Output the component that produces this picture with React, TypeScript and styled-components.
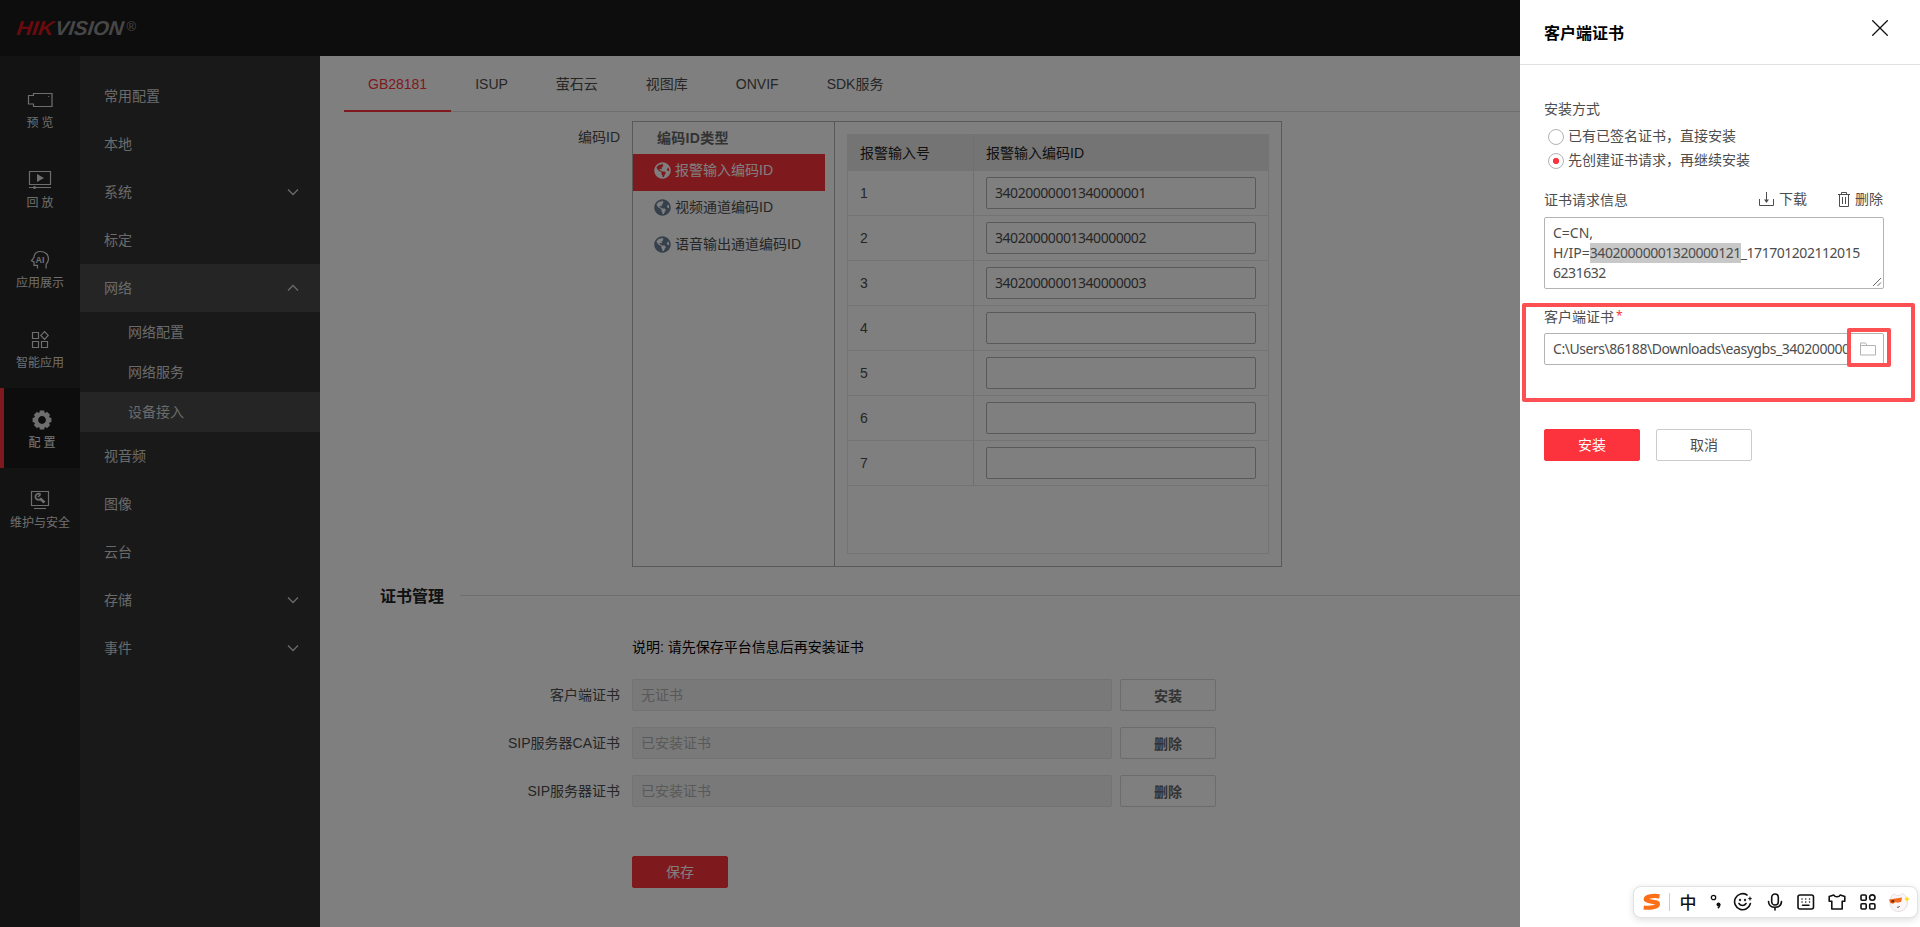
import React from 'react';
import styled, { createGlobalStyle, css } from 'styled-components';
import { FaGlobeAmericas } from 'react-icons/fa';

const arial = `"Liberation Sans", "Noto Sans CJK SC", sans-serif`;
const yahei = `"Noto Sans", "Noto Sans CJK SC", sans-serif`;

const GlobalStyle = createGlobalStyle`
  *, *::before, *::after { box-sizing: border-box; }
  body { margin: 0; overflow: hidden; font: 14px/20px ${arial}; color: #4d4d4d; }
`;

const Page = styled.div`
  position: relative;
  display: flex;
  flex-direction: column;
  height: 927px;
  overflow: hidden;
  background: #fff;
`;

const Header = styled.header`
  flex: none;
  display: flex;
  align-items: center;
  height: 56px;
  padding-left: 15px;
  background: #1a1a1a;
`;

const Body = styled.div`
  flex: 1;
  display: flex;
  min-height: 0;
`;

/* ---------- side rail ---------- */
const Rail = styled.nav`
  flex: none;
  width: 80px;
  padding-top: 12px;
  background: #262626;
`;

const RailItem = styled.a<{ $active?: boolean }>`
  display: flex;
  flex-direction: column;
  align-items: center;
  gap: 2px;
  height: 80px;
  padding-top: 20px;
  font: 12px/18px ${yahei};
  color: #ddd;
  white-space: pre;
  ${(p) => p.$active && css`
    background: #1a1a1a;
    border-left: 4px solid #fc333c;
    color: #eee;
  `}
  svg { display: block; flex: none; }
`;

/* ---------- menu ---------- */
const Menu = styled.nav`
  flex: none;
  width: 240px;
  padding-top: 16px;
  background: #333;
  font-family: ${yahei};
`;

const MenuItem = styled.a<{ $sub?: boolean; $active?: boolean }>`
  display: flex;
  align-items: center;
  justify-content: space-between;
  height: ${(p) => (p.$sub ? 40 : 48)}px;
  padding: 0 21px 0 ${(p) => (p.$sub ? 48 : 24)}px;
  color: #d4d4d4;
  background: ${(p) => (p.$active ? '#4b4b4b' : 'transparent')};
`;

/* ---------- content ---------- */
const Main = styled.main`
  flex: 1;
  min-width: 0;
  padding-left: 24px;
`;

const Tabs = styled.div`
  display: flex;
  height: 56px;
  box-shadow: inset 0 -1px #dcdcdc;
`;

const Tab = styled.a<{ $active?: boolean }>`
  padding: 0 24px;
  line-height: 56px;
  color: ${(p) => (p.$active ? '#fc333c' : '#4d4d4d')};
  box-shadow: ${(p) => (p.$active ? 'inset 0 -2px #fc333c' : 'none')};
`;

const FormRow = styled.div<{ $top: number }>`
  display: flex;
  margin-top: ${(p) => p.$top}px;
`;

const Label = styled.label`
  flex: none;
  width: 276px;
  margin-right: 12px;
  line-height: 32px;
  text-align: right;
`;

const IdPanel = styled.div`
  display: flex;
  width: 650px;
  height: 446px;
  border: 1px solid #b3b3b3;
`;

const Tree = styled.div`
  width: 202px;
  border-right: 1px solid #b3b3b3;
`;

const TreeTitle = styled.div`
  height: 32px;
  padding-left: 24px;
  line-height: 33px;
  font-weight: bold;
  letter-spacing: 0.3px;
  color: #666;
`;

const TreeItem = styled.div<{ $active?: boolean }>`
  display: flex;
  align-items: center;
  gap: 4px;
  width: 192px;
  height: 37px;
  padding: 0 0 6px 21px;
  white-space: nowrap;
  background: ${(p) => (p.$active ? '#fc333c' : 'transparent')};
  color: ${(p) => (p.$active ? '#fff' : '#4d4d4d')};
  svg { margin-top: 2px; color: ${(p) => (p.$active ? '#fff' : '#6c8098')}; }
`;

const Table = styled.div`
  width: 422px;
  height: 420px;
  margin: 12px;
  border: 1px solid #e8e8e8;
  border-top: 0;
`;

const TableRow = styled.div<{ $head?: boolean }>`
  display: grid;
  grid-template-columns: 126px 1fr;
  align-items: center;
  height: ${(p) => (p.$head ? 37 : 45)}px;
  background: ${(p) => (p.$head ? '#e8e8e8' : 'transparent')};
  color: ${(p) => (p.$head ? '#222' : '#4d4d4d')};
  border-bottom: ${(p) => (p.$head ? 0 : 1)}px solid #e8e8e8;
`;

const Cell = styled.div<{ $divided?: boolean }>`
  display: flex;
  align-items: center;
  height: 100%;
  padding-left: 12px;
  border-right: ${(p) => (p.$divided ? '1px solid #dedede' : '0')};
`;

const IdInput = styled.input`
  width: 270px;
  height: 32px;
  padding: 0 8px 2px;
  border: 1px solid #b3b3b3;
  border-radius: 2px;
  font: 14px ${yahei};
  letter-spacing: -0.46px;
  color: #4d4d4d;
  background: #fff;
  outline: 0;
`;

const SectionTitle = styled.div`
  display: flex;
  align-items: center;
  gap: 16px;
  height: 24px;
  margin: 18px 0 0 36px;
  font-size: 16px;
  font-weight: bold;
  line-height: 24px;
  color: #222;
  &::after { content: ''; flex: 1; height: 1px; margin-bottom: 3px; background: #dcdcdc; }
`;

const Note = styled.p`
  margin: 28px 0 0 288px;
  line-height: 20px;
  color: #000;
`;

const Disabled = styled.div`
  width: 480px;
  height: 32px;
  margin-right: 8px;
  padding-left: 8px;
  border: 1px solid #e6e6e6;
  border-radius: 2px;
  background: #f3f3f3;
  line-height: 30px;
  color: #b3b3b3;
`;

const Button = styled.button<{ $primary?: boolean; $strong?: boolean }>`
  width: 96px;
  height: 32px;
  padding: ${(p) => (p.$strong ? '2px 0 0' : '0')};
  border: 1px solid ${(p) => (p.$primary ? '#fc333c' : p.$strong ? '#d8d8d8' : '#ccc')};
  border-radius: 2px;
  background: ${(p) => (p.$primary ? '#fc333c' : '#fff')};
  color: ${(p) => (p.$primary ? '#fff' : p.$strong ? '#666' : '#4d4d4d')};
  font: ${(p) => (p.$strong ? 'bold' : 'normal')} 14px/28px ${yahei};
`;

const SaveRow = styled.div`
  margin: 49px 0 0 288px;
`;

const Mask = styled.div`
  position: absolute;
  inset: 0;
  background: rgba(0, 0, 0, 0.5);
`;

/* ---------- drawer ---------- */
const Drawer = styled.aside`
  position: absolute;
  inset: 0 0 0 auto;
  width: 400px;
  background: #fff;
  font-family: ${yahei};
`;

const DrawerHead = styled.div`
  display: flex;
  justify-content: space-between;
  height: 65px;
  padding: 20px 32px 0 24px;
  border-bottom: 1px solid #e0e0e0;
`;

const DrawerTitle = styled.h2`
  margin: 0;
  font-size: 16px;
  line-height: 27px;
  color: #000;
`;

const DrawerBody = styled.div`
  display: flex;
  flex-direction: column;
  padding: 34px 36px 0 24px;
`;

const FieldLabel = styled.div`
  line-height: 20px;
  sup { margin-left: 2px; color: #fc333c; font-size: 12px; line-height: 0; vertical-align: 2px; }
`;

const RadioGroup = styled.div`
  display: flex;
  flex-direction: column;
  gap: 4px;
  margin: 7px 0 0 4px;
`;

const Radio = styled.label`
  display: flex;
  align-items: center;
  gap: 4px;
  height: 20px;
`;

const Dot = styled.span<{ $on?: boolean }>`
  width: 16px;
  height: 16px;
  margin-top: 1px;
  border: 1px solid #b3b3b3;
  border-radius: 50%;
  background: ${(p) => (p.$on ? 'radial-gradient(circle, #fc333c 2.8px, #fff 3.5px)' : '#fff')};
`;

const RequestBar = styled.div<{ $top: number }>`
  display: flex;
  align-items: center;
  height: 20px;
  margin-top: ${(p) => p.$top}px;
`;

const Action = styled.a<{ $first?: boolean }>`
  display: flex;
  align-items: center;
  gap: 5px;
  margin-left: ${(p) => (p.$first ? 'auto' : '31px')};
  padding: 0 ${(p) => (p.$first ? 0 : 1)}px 2px 0;
`;

const RequestText = styled.div`
  position: relative;
  height: 72px;
  margin-top: 7px;
  padding: 5px 8px;
  border: 1px solid #b3b3b3;
  border-radius: 2px;
  white-space: pre;
`;

const Digits = styled.span`
  letter-spacing: -0.46px;
`;

const Selected = styled.mark`
  padding-bottom: 1px;
  background: #c8c8c8;
  color: #4d4d4d;
  letter-spacing: -0.46px;
`;

const Grip = styled.svg`
  position: absolute;
  right: 1px;
  bottom: 1px;
`;

const FileField = styled.div`
  display: flex;
  align-items: center;
  justify-content: space-between;
  height: 32px;
  margin-top: 6px;
  padding: 0 7px 0 8px;
  border: 1px solid #b3b3b3;
  border-radius: 2px;
`;

const FilePath = styled.span`
  white-space: nowrap;
  letter-spacing: -0.46px;
`;

const Actions = styled.div`
  display: flex;
  gap: 16px;
  margin-top: 64px;
`;

const Highlight = styled.div<{ $x: number; $y: number; $w: number; $h: number }>`
  position: absolute;
  left: ${(p) => p.$x}px;
  top: ${(p) => p.$y}px;
  width: ${(p) => p.$w}px;
  height: ${(p) => p.$h}px;
  border: 4px solid #fd5053;
  border-radius: 2px;
`;

/* ---------- input method bar ---------- */
const ImeBar = styled.div`
  position: absolute;
  right: 2px;
  bottom: 9px;
  display: grid;
  grid-template-columns: 36px 36px 19px 36px 28px 34px 27px 35px 27px;
  align-items: center;
  justify-items: center;
  width: 285px;
  height: 32px;
  border: 1px solid #e2e2e2;
  border-radius: 8px;
  background: #fff;
  box-shadow: 0 2px 7px rgba(0, 0, 0, 0.13);
  svg { display: block; }
`;

const ImeLogo = styled.div`
  justify-self: stretch;
  display: flex;
  justify-content: center;
  height: 18px;
  border-right: 1px solid #ccc;
`;

const ImeMode = styled.span`
  font: 500 17px/30px "Noto Sans CJK SC", sans-serif;
  color: #111;
`;

/* ---------- drawings ---------- */
const Logo = () => (
  <svg width="126" height="20" viewBox="0 0 126 20">
    <g transform="translate(2 0) skewX(-7)" fontFamily="Liberation Sans" fontWeight="700" fontStyle="italic" fontSize="20">
      <text x="1" y="17" fill="#d0151d" textLength="37" lengthAdjust="spacingAndGlyphs">HIK</text>
      <text x="39.500" y="17" fill="#8e8e8e" textLength="68.500" lengthAdjust="spacingAndGlyphs">VISION</text>
    </g>
    <text x="111.500" y="12.500" fill="#8e8e8e" fontFamily="Liberation Sans" fontSize="13">®</text>
  </svg>
);

const line = { fill: 'none', stroke: '#ddd', strokeWidth: 1.2 };

const CameraIcon = () => (
  <svg width="26" height="24" viewBox="0 0 26 24" {...line}>
    <path d="M6.500 5.500h18.500v13H6.500v-2.500H1.500V7.500h5z" />
    <path d="M21 8.500h1.200" stroke="#bbb" />
  </svg>
);

const PlaybackIcon = () => (
  <svg width="24" height="24" viewBox="0 0 24 24" {...line}>
    <path d="M1.500 3.500h21v13h-21zM1 19.500h22" />
    <path d="M9 6l7 4-7 4z" fill="#ddd" stroke="none" />
    <circle cx="6.500" cy="19.500" r="1.500" fill="#ddd" stroke="none" />
  </svg>
);

const AiIcon = () => (
  <svg width="24" height="24" viewBox="0 0 24 24" {...line}>
    <path d="M9.500 20.500v-3.200H6V14l-2.500-1.200L6 9.300C6.300 5.700 8.700 3.500 12.500 3.500c4.600 0 8 3 8 7.200 0 2.800-1.200 4.200-2.400 5.800v4" />
    <text x="7.600" y="14.800" fontFamily="Liberation Sans" fontWeight="700" fontSize="9" fill="#ddd" stroke="none">AI</text>
  </svg>
);

const AppsIcon = () => (
  <svg width="24" height="24" viewBox="0 0 24 24" {...line}>
    <path d="M4.500 4.500h6v6h-6zM4.500 13.500h6v6h-6zM13.500 13.500h6v6h-6zM16.500 3.500l3.700 3.900-3.700 3.900-3.700-3.900z" />
  </svg>
);

const GearIcon = () => (
  <svg width="24" height="24" viewBox="-12 -12 24 24">
    <circle r="6" fill="none" stroke="#ddd" strokeWidth="4.200" />
    {[0, 45, 90, 135].map((a) => (
      <path key={a} d="M-2.300-9.400h4.600v3h-4.600zM-2.300 6.400h4.600v3h-4.600z" fill="#ddd" transform={`rotate(${a})`} />
    ))}
  </svg>
);

const MaintainIcon = () => (
  <svg width="24" height="24" viewBox="0 0 24 24" {...line}>
    <path d="M3.500 3.500h17v14h-17zM6 20.500h12" />
    <path d="M12 10.500l4.500 4" strokeWidth="2.800" />
    <path d="M12.700 6.500a3.100 3.100 0 1 0 .5 3.800" strokeWidth="1.700" />
    <path d="M10 9l2.500-2.500" strokeWidth="1.400" />
  </svg>
);

const Chevron = ({ up }: { up?: boolean }) => (
  <svg width="12" height="8" viewBox="0 0 12 8" fill="none" stroke="#d4d4d4" strokeWidth="1.300">
    <path d={up ? 'M1 6.500l5-5 5 5' : 'M1 1.500l5 5 5-5'} />
  </svg>
);

const CloseIcon = () => (
  <svg width="16" height="16" viewBox="0 0 16 16" stroke="#111" strokeWidth="1.300">
    <path d="M.3.300l15.400 15.400M15.700.300L.300 15.700" />
  </svg>
);

const DownloadIcon = () => (
  <svg width="15" height="15" viewBox="0 0 15 15" fill="none" stroke="#4d4d4d">
    <path d="M.500 7v6.500h14V7M7.500 0v10" />
    <path d="M5 7.500h5l-2.500 3.500z" fill="#4d4d4d" stroke="none" />
  </svg>
);

const TrashIcon = () => (
  <svg width="12" height="15" viewBox="0 0 12 15" fill="none" stroke="#4d4d4d">
    <path d="M0 2.500h12M3.500 2.500v-2h5v2M1.500 2.500v12h9v-12M4.500 5v7M7.500 5v7" />
  </svg>
);

const FolderIcon = () => (
  <svg width="16" height="14" viewBox="0 0 16 14" fill="none" stroke="#b3b3b3">
    <path d="M.500 13V1h5l1.500 2.500h8.500V13zM.500 3.500H7" />
  </svg>
);

const ime = { fill: 'none', stroke: '#111', strokeWidth: 1.6, strokeLinecap: 'round' as const, strokeLinejoin: 'round' as const };

const SogouIcon = () => (
  <svg width="20" height="18" viewBox="0 0 20 18" fill="none" stroke="#fb6f16" strokeWidth="4.200" strokeLinejoin="round">
    <path d="M17.500 3.300C11 2.300 3.600 3.500 3.700 6.400c.1 2.700 12.400 1.600 12.200 4.600-.2 3.200-7.700 4.300-14.200 3.500" />
  </svg>
);

const PunctIcon = () => (
  <svg width="12" height="16" viewBox="0 0 12 16" fill="none" stroke="#111" strokeWidth="1.300">
    <circle cx="3.500" cy="3.500" r="2.200" />
    <circle cx="8.500" cy="10.500" r="2" fill="#111" stroke="none" />
    <path d="M9.700 10.500c.2 1.900-.6 2.800-1.900 3.600" strokeWidth="1.500" />
  </svg>
);

const FaceIcon = () => (
  <svg width="20" height="20" viewBox="0 0 20 20" {...ime}>
    <path d="M14 3A8 8 0 1 0 17.400 11.500M6 11.500c1.500 2.600 5.500 2.600 7 0" />
    <circle cx="7" cy="8" r=".400" />
    <circle cx="12" cy="8" r=".400" />
    <path d="M17 4.600l.6 1.500 1.500.6-1.500.6-.6 1.500-.6-1.500-1.500-.6 1.500-.6z" fill="#111" strokeWidth=".2" />
  </svg>
);

const MicIcon = () => (
  <svg width="16" height="18" viewBox="0 0 16 18" {...ime}>
    <rect x="4.700" y="1" width="6.600" height="11" rx="3.300" />
    <path d="M1.500 8.500c.2 3.800 3 5.800 6.500 5.800s6.300-2 6.500-5.800M8 14.500V17" />
  </svg>
);

const KeyboardIcon = () => (
  <svg width="18" height="16" viewBox="0 0 18 16" {...ime}>
    <rect x="1" y="1" width="15.500" height="14" rx="2" />
    <path d="M5 5h.1M8.700 5h.1M12.500 5h.1M5 8h.1M8.700 8h.1M12.500 8h.1M5.500 11.200h6.500" strokeWidth="1.400" />
  </svg>
);

const ShirtIcon = () => (
  <svg width="18" height="16" viewBox="0 0 18 16" {...ime}>
    <path d="M5.800 1L1.200 2.600v4.600h2.600V15h10.400V7.200h2.600V2.600L12.200 1C11.200 3.300 6.800 3.300 5.800 1z" />
  </svg>
);

const GridIcon = () => (
  <svg width="16" height="16" viewBox="0 0 16 16" {...ime}>
    <rect x="1" y="1" width="5.200" height="5.200" rx="1" />
    <circle cx="12.300" cy="3.600" r="2.700" />
    <rect x="1" y="9.800" width="5.200" height="5.200" rx="1" />
    <rect x="9.700" y="9.800" width="5.200" height="5.200" rx="1" />
  </svg>
);

const AvatarIcon = () => (
  <svg width="22" height="22" viewBox="0 0 22 22">
    <path d="M2 13C2 7 4 3.500 6 3l2.500 1.500h3L15 2.500c2 2 4.500 5 4.500 9.500a8.800 8.800 0 0 1-17.500 1z" fill="#faf6f8" stroke="#e6dfe6" />
    <path d="M1 8.500L14 6.500l-.8 4.300-3.700.9-1.700-.6-2.600 1.700-2.900-.9z" fill="#f26a1f" />
    <path d="M3 9.500l3.500-.5-.8 2.300-2.200.2z" fill="#5b2b1c" />
    <path d="M9 16.200c1.200.3 2.200-.1 2.600-1.200" stroke="#444" fill="none" />
    <path d="M19 5l.9 2.200 2.100.9-2.100.9L19 11.200l-.9-2.200-2.100-.9 2.100-.9z" fill="#ffd91f" />
  </svg>
);

/* ---------- data ---------- */
const rail = [
  { text: '预 览', icon: <CameraIcon /> },
  { text: '回 放', icon: <PlaybackIcon /> },
  { text: '应用展示', icon: <AiIcon /> },
  { text: '智能应用', icon: <AppsIcon /> },
  { text: '配 置', icon: <GearIcon />, active: true },
  { text: '维护与安全', icon: <MaintainIcon /> },
];

const menu: { text: string; sub?: boolean; active?: boolean; arrow?: 'up' | 'down' }[] = [
  { text: '常用配置' },
  { text: '本地' },
  { text: '系统', arrow: 'down' },
  { text: '标定' },
  { text: '网络', arrow: 'up', active: true },
  { text: '网络配置', sub: true },
  { text: '网络服务', sub: true },
  { text: '设备接入', sub: true, active: true },
  { text: '视音频' },
  { text: '图像' },
  { text: '云台' },
  { text: '存储', arrow: 'down' },
  { text: '事件', arrow: 'down' },
];

const tabs = ['GB28181', 'ISUP', '萤石云', '视图库', 'ONVIF', 'SDK服务'];
const idTypes = ['报警输入编码ID', '视频通道编码ID', '语音输出通道编码ID'];
const ids = ['34020000001340000001', '34020000001340000002', '34020000001340000003', '', '', '', ''];
const certs = [
  { label: '客户端证书', state: '无证书', action: '安装' },
  { label: 'SIP服务器CA证书', state: '已安装证书', action: '删除' },
  { label: 'SIP服务器证书', state: '已安装证书', action: '删除' },
];

export default function App() {
  return (
    <Page>
      <GlobalStyle />
      <Header><Logo /></Header>
      <Body>
        <Rail>
          {rail.map((r) => (
            <RailItem key={r.text} $active={r.active}>{r.icon}{r.text}</RailItem>
          ))}
        </Rail>
        <Menu>
          {menu.map((m) => (
            <MenuItem key={m.text} $sub={m.sub} $active={m.active}>
              {m.text}
              {m.arrow && <Chevron up={m.arrow === 'up'} />}
            </MenuItem>
          ))}
        </Menu>
        <Main>
          <Tabs>{tabs.map((t, i) => <Tab key={t} $active={i === 0}>{t}</Tab>)}</Tabs>
          <FormRow $top={9}>
            <Label>编码ID</Label>
            <IdPanel>
              <Tree>
                <TreeTitle>编码ID类型</TreeTitle>
                {idTypes.map((t, i) => (
                  <TreeItem key={t} $active={i === 0}><FaGlobeAmericas size={17} />{t}</TreeItem>
                ))}
              </Tree>
              <Table>
                <TableRow $head>
                  <Cell $divided>报警输入号</Cell>
                  <Cell>报警输入编码ID</Cell>
                </TableRow>
                {ids.map((id, i) => (
                  <TableRow key={i}>
                    <Cell $divided>{i + 1}</Cell>
                    <Cell><IdInput defaultValue={id} /></Cell>
                  </TableRow>
                ))}
              </Table>
            </IdPanel>
          </FormRow>
          <SectionTitle>证书管理</SectionTitle>
          <Note>说明: 请先保存平台信息后再安装证书</Note>
          {certs.map((c, i) => (
            <FormRow key={c.label} $top={i === 0 ? 22 : 16}>
              <Label>{c.label}</Label>
              <Disabled>{c.state}</Disabled>
              <Button $strong>{c.action}</Button>
            </FormRow>
          ))}
          <SaveRow><Button $primary>保存</Button></SaveRow>
        </Main>
      </Body>
      <Mask />
      <Drawer>
        <DrawerHead>
          <DrawerTitle>客户端证书</DrawerTitle>
          <CloseIcon />
        </DrawerHead>
        <DrawerBody>
          <FieldLabel>安装方式</FieldLabel>
          <RadioGroup>
            <Radio><Dot />已有已签名证书，直接安装</Radio>
            <Radio><Dot $on />先创建证书请求，再继续安装</Radio>
          </RadioGroup>
          <RequestBar $top={20}>
            <FieldLabel>证书请求信息</FieldLabel>
            <Action $first><DownloadIcon />下载</Action>
            <Action><TrashIcon />删除</Action>
          </RequestBar>
          <RequestText>
            {'C=CN,\nH/IP='}<Selected>34020000001320000121</Selected><Digits>{'_171701202112015\n6231632'}</Digits>
            <Grip width="10" height="10" stroke="#666" strokeWidth="1">
              <path d="M1 9l8-8M5.500 9L9 5.500" />
            </Grip>
          </RequestText>
          <RequestBar $top={18}>
            <FieldLabel>客户端证书<sup>*</sup></FieldLabel>
          </RequestBar>
          <FileField>
            <FilePath>{'C:\\Users\\86188\\Downloads\\easygbs_340200000'}</FilePath>
            <FolderIcon />
          </FileField>
          <Actions>
            <Button $primary>安装</Button>
            <Button>取消</Button>
          </Actions>
        </DrawerBody>
        <Highlight $x={2} $y={303} $w={393} $h={99} />
        <Highlight $x={327} $y={328} $w={44} $h={39} />
      </Drawer>
      <ImeBar>
        <ImeLogo><SogouIcon /></ImeLogo>
        <ImeMode>中</ImeMode>
        <PunctIcon />
        <FaceIcon />
        <MicIcon />
        <KeyboardIcon />
        <ShirtIcon />
        <GridIcon />
        <AvatarIcon />
      </ImeBar>
    </Page>
  );
}
